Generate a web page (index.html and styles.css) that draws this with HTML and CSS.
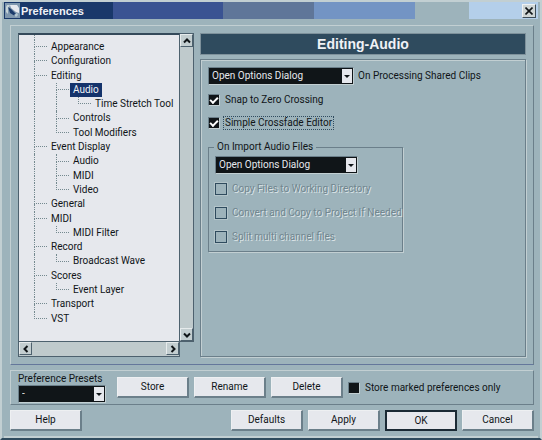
FILE: index.html
```html
<!DOCTYPE html>
<html lang="en">
<head>
<meta charset="utf-8">
<title>Preferences</title>
<link rel="stylesheet" href="styles.css">
</head>
<body>
<div class="window">
  <header class="titlebar">
    <svg class="app-icon" viewBox="0 0 15 15" aria-hidden="true">
      <rect width="15" height="15" fill="#7f97ae"/>
      <path d="M2 2h3L3 6v5L1 9V4z" fill="#c5d3d8"/>
      <path d="M5 2h7l2 3v5l-3-1-5-4z" fill="#e7e9ef"/>
      <path d="M3 4l3 2 6 6-2 1-5-3z" fill="#1b3a6b"/>
      <path d="M9 12l3-2 1 2-2 2z" fill="#b5c8d2"/>
    </svg>
    <h1>Preferences</h1>
    <button class="close" aria-label="Close">
      <svg viewBox="0 0 8 8" aria-hidden="true"><path d="M0.500 0.500L7.500 7.500M7.500 0.500L0.500 7.500" stroke="#101518" stroke-width="1.600"/></svg>
    </button>
  </header>

  <main class="body">
    <section class="panel main-panel">
      <div class="browser">
        <div class="tree-box">
          <ul class="tree">
            <li><i class="tee"></i><span>Appearance</span></li>
            <li><i class="tee"></i><span>Configuration</span></li>
            <li><i class="tee"></i><span>Editing</span></li>
            <li><i class="bar"></i><i class="tee"></i><span class="selected">Audio</span></li>
            <li><i class="bar"></i><i class="bar"></i><i class="end"></i><span>Time Stretch Tool</span></li>
            <li><i class="bar"></i><i class="tee"></i><span>Controls</span></li>
            <li><i class="bar"></i><i class="end"></i><span>Tool Modifiers</span></li>
            <li><i class="tee"></i><span>Event Display</span></li>
            <li><i class="bar"></i><i class="tee"></i><span>Audio</span></li>
            <li><i class="bar"></i><i class="tee"></i><span>MIDI</span></li>
            <li><i class="bar"></i><i class="end"></i><span>Video</span></li>
            <li><i class="tee"></i><span>General</span></li>
            <li><i class="tee"></i><span>MIDI</span></li>
            <li><i class="bar"></i><i class="end"></i><span>MIDI Filter</span></li>
            <li><i class="tee"></i><span>Record</span></li>
            <li><i class="bar"></i><i class="end"></i><span>Broadcast Wave</span></li>
            <li><i class="tee"></i><span>Scores</span></li>
            <li><i class="bar"></i><i class="end"></i><span>Event Layer</span></li>
            <li><i class="tee"></i><span>Transport</span></li>
            <li><i class="end"></i><span>VST</span></li>
          </ul>
        </div>
        <div class="scroll vertical">
          <button aria-label="Scroll up"><svg viewBox="0 0 8 8"><path d="M1 5.500L4 2.500L7 5.500"/></svg></button>
          <button aria-label="Scroll down"><svg viewBox="0 0 8 8"><path d="M1 2.500L4 5.500L7 2.500"/></svg></button>
        </div>
        <div class="scroll horizontal">
          <button aria-label="Scroll left"><svg viewBox="0 0 8 8"><path d="M5.500 1L2.500 4L5.500 7"/></svg></button>
          <button aria-label="Scroll right"><svg viewBox="0 0 8 8"><path d="M2.500 1L5.500 4L2.500 7"/></svg></button>
        </div>
      </div>

      <div class="page">
        <h2>Editing-Audio</h2>
        <div class="options">
          <div class="field">
            <div class="combo">
              <select id="shared"><option>Open Options Dialog</option></select>
              <span class="arrow"></span>
            </div>
            <label for="shared">On Processing Shared Clips</label>
          </div>
          <label class="check"><input type="checkbox" checked><span>Snap to Zero Crossing</span></label>
          <label class="check"><input type="checkbox" checked><span class="focused">Simple Crossfade Editor</span></label>
          <fieldset>
            <legend>On Import Audio Files</legend>
            <div class="combo">
              <select aria-label="On Import Audio Files"><option>Open Options Dialog</option></select>
              <span class="arrow"></span>
            </div>
            <label class="check"><input type="checkbox" disabled><span>Copy Files to Working Directory</span></label>
            <label class="check"><input type="checkbox" disabled><span>Convert and Copy to Project If Needed</span></label>
            <label class="check"><input type="checkbox" disabled><span>Split multi channel files</span></label>
          </fieldset>
        </div>
      </div>
    </section>

    <section class="panel presets">
      <div class="preset">
        <label for="preset">Preference Presets</label>
        <div class="combo">
          <select id="preset"><option>-</option></select>
          <span class="arrow"></span>
        </div>
      </div>
      <button class="btn">Store</button>
      <button class="btn">Rename</button>
      <button class="btn">Delete</button>
      <label class="check"><input type="checkbox"><span>Store marked preferences only</span></label>
    </section>

    <footer class="actions">
      <button class="btn help">Help</button>
      <button class="btn">Defaults</button>
      <button class="btn">Apply</button>
      <button class="btn default">OK</button>
      <button class="btn">Cancel</button>
    </footer>
  </main>
</div>
</body>
</html>
```
FILE: styles.css
```css
:root {
  --face: #9db3bb;
  --light: #c2cfd2;
  --dark: #6b7f8a;
  --ink: #101518;
  --paper: #e6e8ed;
  --navy: #2f4b5e;
}

* {
  box-sizing: border-box;
}

body {
  margin: 0;
  background: var(--face);
  color: var(--ink);
  font: 10px/14px Roboto, "Liberation Sans", sans-serif;
}

button,
select {
  font: inherit;
  color: inherit;
}

.window {
  display: flex;
  flex-direction: column;
  min-height: 100vh;
  padding: 0 2px 0 2px;
  border: 2px solid var(--light);
  border-bottom: 2px solid var(--navy);
}

.titlebar {
  display: flex;
  align-items: center;
  height: 17px;
  padding: 0 2px 0 1px;
  background: linear-gradient(to right,
    #19386a 20.5%, #3a5392 20.5% 41%, #5f7699 41% 58%,
    #7394c4 58% 77%, #9db3bb 77% 87%, #b4cfea 87%);
}

.app-icon {
  width: 15px;
  height: 15px;
}

.titlebar h1 {
  flex: 1;
  margin: 0 0 0 1px;
  color: #f0f2f6;
  font: bold 11px/16px "Liberation Sans", sans-serif;
}

.close {
  display: grid;
  place-items: center;
  width: 14px;
  height: 14px;
  padding: 0;
  background: #cfd6d6;
  border: 1px solid #eef1f2;
  border-right-color: #3c4c58;
  border-bottom-color: #3c4c58;
}

.close svg {
  width: 8px;
  height: 8px;
}

.body {
  flex: 1;
  display: flex;
  flex-direction: column;
  padding: 6px 4px 5px 6px;
  border-bottom: 2px solid var(--light);
}

.panel {
  border: 1px solid var(--light);
  border-right-color: var(--dark);
  border-bottom-color: #64779b;
}

.main-panel {
  flex: 1;
  display: flex;
  gap: 6px;
  padding: 7px;
}

.browser {
  flex: 0 0 176px;
  display: grid;
  grid-template-columns: minmax(0, 1fr) 14px;
  grid-template-rows: 1fr 15px;
}

.tree-box {
  display: flex;
  background: var(--paper);
  border: 1px solid #4d616e;
  border-top: 2px solid #34495a;
}

.tree {
  flex: 1;
  display: flex;
  flex-direction: column;
  margin: 0;
  padding: 0 0 15px 15px;
  list-style: none;
}

.tree::before {
  content: "";
  height: 5px;
  border-left: 1px dotted #74898f;
}

.tree li {
  flex: 1;
  display: flex;
  align-items: stretch;
  min-height: 14px;
  white-space: nowrap;
}

.tree i {
  display: grid;
  width: 22px;
  grid-template: 1fr 1fr / 1fr;
}

.tree i::before,
.tree i::after {
  content: "";
  border-left: 1px dotted #74898f;
}

.tree .tee,
.tree .end {
  width: 17px;
  padding-right: 4px;
}

.tree .tee::before,
.tree .end::before {
  border-bottom: 1px dotted #74898f;
}

.tree .end::after {
  border-left: 0;
}

.tree .selected {
  margin-left: -3px;
  padding: 0 3px;
  background: #14336b;
  color: #f0f2f6;
}

.scroll {
  display: flex;
  justify-content: space-between;
  background: #bfcacc;
  border: 1px solid #4d616e;
}

.vertical {
  flex-direction: column;
  border-left: 0;
}

.horizontal {
  border-top: 0;
}

.scroll button {
  display: grid;
  place-items: center;
  width: 13px;
  height: 13px;
  padding: 0;
  background: #c3ced0;
  border: 1px solid #e6ebec;
  border-right-color: #4d616e;
  border-bottom-color: #4d616e;
}

.scroll svg {
  width: 8px;
  height: 8px;
  fill: none;
  stroke: var(--ink);
  stroke-width: 2;
}

.page {
  flex: 1;
  display: flex;
  flex-direction: column;
  gap: 4px;
}

.page h2 {
  margin: 0;
  background: var(--navy);
  border: 1px solid #7e919b;
  color: #f0f2f6;
  font: bold 14px/20px "Liberation Sans", sans-serif;
  text-align: center;
}

.options {
  flex: 1;
  padding: 7px;
  border: 1px solid var(--dark);
  box-shadow: inset 1px 1px var(--light), 1px 1px var(--light);
}

.field {
  display: flex;
  align-items: center;
  gap: 4px;
}

.combo {
  position: relative;
  width: 146px;
  height: 18px;
  background: var(--ink);
  border: 1px solid var(--dark);
  border-right-color: var(--light);
  border-bottom-color: var(--light);
}

.combo select {
  display: block;
  width: 100%;
  height: 100%;
  padding: 0 14px 0 3px;
  appearance: none;
  background: transparent;
  border: 0;
  border-radius: 0;
  color: var(--paper);
}

.arrow {
  position: absolute;
  top: 1px;
  right: 1px;
  bottom: 1px;
  width: 10px;
  display: grid;
  place-items: center;
  background: var(--paper);
  pointer-events: none;
}

.arrow::before {
  content: "";
  border: 3px solid transparent;
  border-top-color: var(--ink);
  border-bottom: 0;
}

.check {
  display: flex;
  align-items: center;
  gap: 4px;
  height: 23px;
  white-space: nowrap;
}

.field + .check {
  margin-top: 3px;
}

.check input {
  flex: none;
  appearance: none;
  display: grid;
  place-items: center;
  width: 12px;
  height: 12px;
  margin: 0;
  background: var(--ink);
  border: 1px solid var(--dark);
  border-right-color: var(--light);
  border-bottom-color: var(--light);
}

.check input:checked::before {
  content: "";
  width: 6px;
  height: 3px;
  border: solid #fff;
  border-width: 0 0 2px 2px;
  transform: rotate(-45deg);
}

.check span {
  padding: 0 1px;
  line-height: 12px;
}

.check .focused {
  outline: 1px dotted var(--navy);
}

.check input:disabled {
  background: transparent;
  border: 1px solid var(--navy);
  outline: 1px solid #b3c4c9;
}

.check input:disabled + span {
  color: #71868f;
  text-shadow: 1px 1px #dbe3e6;
}

fieldset {
  width: 195px;
  min-width: 0;
  margin: 6px 0 0;
  padding: 2px 6px;
  border: 1px solid var(--dark);
  box-shadow: 1px 1px var(--light);
}

legend {
  margin-left: -1px;
  padding: 0 3px;
}

fieldset .combo {
  width: 143px;
  margin-bottom: 3px;
}

fieldset .check {
  height: 24px;
}

.presets {
  display: flex;
  align-items: center;
  gap: 5px;
  height: 35px;
  margin-top: 5px;
  padding: 0 7px;
  border-bottom-color: var(--dark);
}

.preset {
  width: 88px;
  margin-right: 6px;
}

.preset label {
  display: block;
  line-height: 13px;
  white-space: nowrap;
}

.preset .combo {
  width: 100%;
}

.btn {
  flex: 0 0 72px;
  height: 21px;
  padding: 0;
  background: var(--paper);
  border: 1px solid #eef0f2;
  border-right: 2px solid var(--dark);
  border-bottom: 2px solid var(--dark);
}

.btn.default {
  border: 2px solid #1a2a35;
}

.actions {
  display: flex;
  gap: 5px;
  margin-top: 5px;
}

.help {
  margin-right: auto;
}
```
